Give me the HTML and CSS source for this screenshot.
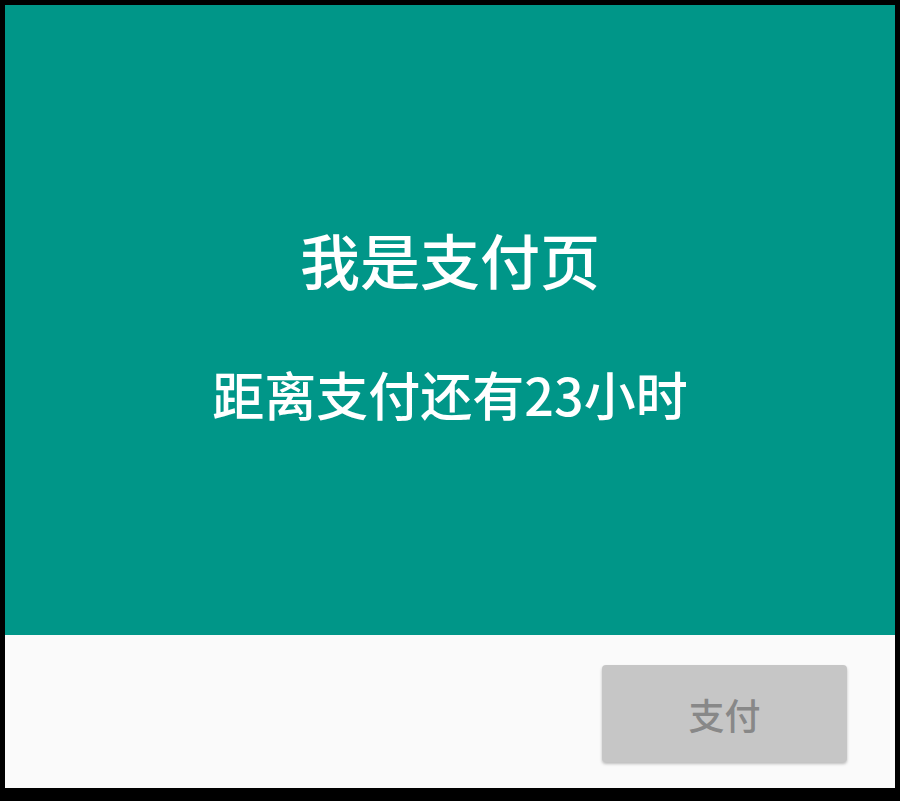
FILE: index.html
```html
<!DOCTYPE html>
<html lang="zh-CN">
<head>
<meta charset="utf-8">
<link rel="stylesheet" href="styles.css">
</head>
<body>
<div class="frame">
  <div class="hero">
    <div class="title">我是支付页</div>
    <div class="subtitle">距离支付还有23小时</div>
  </div>
  <div class="footer">
    <button class="pay" disabled>支付</button>
  </div>
</div>
</body>
</html>
```
FILE: styles.css
```css
html, body {
  margin: 0;
  padding: 0;
  background: #000;
}
body {
  width: 900px;
  height: 801px;
  padding: 5px 5px 13px 5px;
  box-sizing: border-box;
  font-family: "Noto Sans CJK SC", "Noto Sans", sans-serif;
}
.frame {
  height: 783px;
  display: flex;
  flex-direction: column;
  background: #fafafa;
}
.hero {
  height: 630px;
  background: #009688;
  color: #fff;
  display: flex;
  flex-direction: column;
  align-items: center;
  padding-top: 204px;
  box-sizing: border-box;
  font-weight: 500;
}
.title {
  font-size: 60px;
  line-height: 100px;
}
.subtitle {
  font-size: 52px;
  line-height: 80px;
  margin-top: 45px;
}
.footer {
  flex: 1;
  display: flex;
  justify-content: flex-end;
  align-items: flex-start;
  padding: 30px 48px 0 0;
}
.pay {
  width: 245px;
  height: 97px;
  border: none;
  border-radius: 4px;
  background: #c6c6c6;
  color: #888;
  font-family: inherit;
  font-weight: 500;
  font-size: 36px;
  box-shadow: 0 2px 3px rgba(0,0,0,0.25);
  padding: 0;
}
```
